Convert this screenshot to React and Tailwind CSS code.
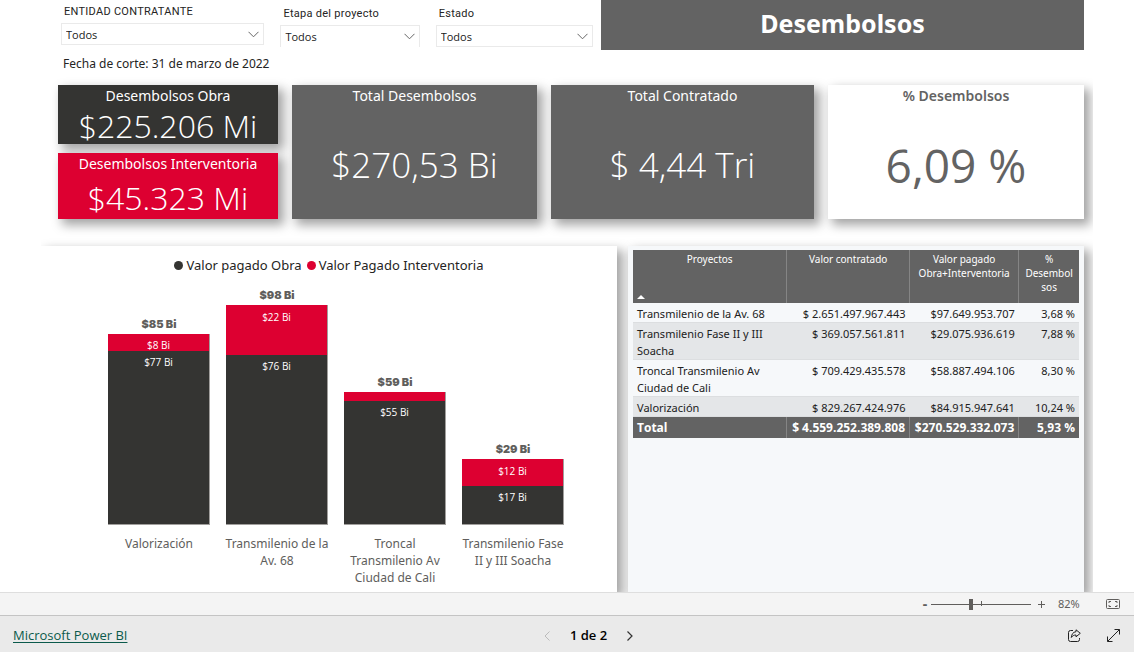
import React from "react";
import clsx from "clsx";

const filters = [
  { id: "entidad", label: "ENTIDAD CONTRATANTE", offset: "", box: "border" },
  { id: "etapa", label: "Etapa del proyecto", offset: "pt-0.5", box: "border border-b-0" },
  { id: "estado", label: "Estado", offset: "pt-0.5", box: "border" },
];

// valores en billones
const bars = [
  { name: "Valorización", total: 84.9, inter: 7.6, labels: ["$85 Bi", "$8 Bi", "$77 Bi"] },
  { name: "Transmilenio de la Av. 68", total: 97.6, inter: 22, labels: ["$98 Bi", "$22 Bi", "$76 Bi"] },
  { name: "Troncal Transmilenio Av Ciudad de Cali", total: 58.9, inter: 4, labels: ["$59 Bi", "", "$55 Bi"] },
  { name: "Transmilenio Fase II y III Soacha", total: 29.2, inter: 12, labels: ["$29 Bi", "$12 Bi", "$17 Bi"] },
];

const PX_POR_BILLON = 2.25;

const rows = [
  ["Transmilenio de la Av. 68", "$ 2.651.497.967.443", "$97.649.953.707", "3,68 %"],
  ["Transmilenio Fase II y III Soacha", "$ 369.057.561.811", "$29.075.936.619", "7,88 %"],
  ["Troncal Transmilenio Av Ciudad de Cali", "$ 709.429.435.578", "$58.887.494.106", "8,30 %"],
  ["Valorización", "$ 829.267.424.976", "$84.915.947.641", "10,24 %"],
];

const shadow = "shadow-[5px_5px_10px_1px_rgba(0,0,0,0.36)]";

function Filter({ id, label, offset, box }) {
  return (
    <div className={clsx("flex flex-col", offset)}>
      <label
        htmlFor={id}
        className="h-[23px] pl-[3px] font-['Roboto',sans-serif] text-[11px] leading-[23px] tracking-wide whitespace-nowrap text-[#252423]"
      >
        {label}
      </label>
      <div className="relative">
        <select
          id={id}
          className={clsx(
            "block h-[22px] w-full appearance-none rounded-none border-[#eaeaea] bg-white pt-0.5 pl-1 font-['Open_Sans',sans-serif] text-[11px] text-[#212121]",
            box
          )}
        >
          <option>Todos</option>
        </select>
        <svg
          className="pointer-events-none absolute top-[8px] right-[5px] h-[7px] w-[11px]"
          viewBox="0 0 11 7"
          fill="none"
          stroke="#666"
        >
          <path d="M.5 .8 5.5 5.8 10.5 .8" />
        </svg>
      </div>
    </div>
  );
}

function Card({ title, value, className, titleClass, valueClass }) {
  return (
    <div className={clsx("flex flex-col text-center", shadow, className)}>
      <h2 className={clsx("text-sm leading-[22px]", titleClass)}>{title}</h2>
      <p
        className={clsx(
          "flex flex-1 items-center justify-center font-['Open_Sans',sans-serif] whitespace-nowrap",
          valueClass
        )}
      >
        {value}
      </p>
    </div>
  );
}

function Bar({ name, total, inter, labels }) {
  const totalHeight = Math.round(total * PX_POR_BILLON);
  const interHeight = Math.round(inter * PX_POR_BILLON);
  return (
    <div className="flex flex-col">
      <div className="flex h-[241px] flex-col justify-end px-2 text-center font-['Open_Sans',sans-serif] text-[10px] leading-4 text-white">
        <div className="pb-0.5 font-['Inter',sans-serif] text-[11px] font-black text-[#605e5c]">{labels[0]}</div>
        <div className="flex flex-col border-r border-b border-[#a19f9d]" style={{ height: totalHeight }}>
          <div
            className={clsx("shrink-0 bg-[#dd0031]", inter > 10 ? "pt-1" : "pt-[3px]")}
            style={{ height: interHeight }}
          >
            {labels[1]}
          </div>
          <div className="flex-1 bg-[#343432] pt-[3px]">{labels[2]}</div>
        </div>
      </div>
      <div className="px-1 pt-[10px] text-center text-xs leading-[17px] text-[#605e5c]">{name}</div>
    </div>
  );
}

function Chart() {
  return (
    <section className={clsx("flex flex-col bg-white", shadow)}>
      <div className="flex h-[38px] items-center justify-center gap-[5px] pt-px text-[13px] text-[#252423]">
        <span className="flex items-center gap-[3px]">
          <span className="size-[9px] rounded-full bg-[#343432]" />
          Valor pagado Obra
        </span>
        <span className="flex items-center gap-[3px]">
          <span className="size-[9px] rounded-full bg-[#dd0031]" />
          Valor Pagado Interventoria
        </span>
      </div>
      <div className="grid grid-cols-4 pr-[45px] pl-[59px]">
        {bars.map((bar) => (
          <Bar key={bar.name} {...bar} />
        ))}
      </div>
    </section>
  );
}

function ProjectTable() {
  const head = "border-r border-[#858585] px-1 pt-0.5 align-top font-normal last:border-r-0";
  return (
    <section className={clsx("bg-[#f6f8fa] px-[5px] pt-1", shadow)}>
      <table className="w-full table-fixed border-collapse text-[11px] text-[#212121]">
        <colgroup>
          <col className="w-[34.5%]" />
          <col className="w-[27.5%]" />
          <col className="w-[24.5%]" />
          <col className="w-[13.5%]" />
        </colgroup>
        <thead>
          <tr className="h-[53px] bg-[#636363] text-[10px] leading-[14px] text-white">
            <th className={clsx(head, "relative")}>
              Proyectos
              <svg className="absolute bottom-1 left-1 h-1 w-2" viewBox="0 0 8 4" fill="#fff">
                <path d="M4 0 8 4H0z" />
              </svg>
            </th>
            <th className={head}>Valor contratado</th>
            <th className={head}>Valor pagado Obra+Interventoria</th>
            <th className={clsx(head, "break-words")}>% Desembolsos</th>
          </tr>
        </thead>
        <tbody className="leading-[17px]">
          {rows.map((row, i) => (
            <tr key={row[0]} className={i % 2 ? "bg-[#e4e6e8]" : ""}>
              {row.map((cell, j) => (
                <td
                  key={cell}
                  className={clsx(
                    "border-b border-[#dcdee0] px-1 pt-0.5 align-top",
                    j ? "text-right whitespace-nowrap" : "pr-4"
                  )}
                >
                  {cell}
                </td>
              ))}
            </tr>
          ))}
        </tbody>
        <tfoot>
          <tr className="h-[21px] bg-[#636363] text-right font-['Open_Sans',sans-serif] text-xs font-bold whitespace-nowrap text-white">
            <td className="border-r border-[#858585] px-1 pt-0.5 text-left">Total</td>
            <td className="border-r border-[#858585] px-1 pt-0.5">$ 4.559.252.389.808</td>
            <td className="border-r border-[#858585] px-1 pt-0.5">$270.529.332.073</td>
            <td className="px-1 pt-0.5">5,93 %</td>
          </tr>
        </tfoot>
      </table>
    </section>
  );
}

function ZoomBar() {
  return (
    <div className="flex h-[23px] shrink-0 items-center justify-end border-t border-[#dedede] bg-[#f4f4f4] pr-[14px] text-[#605e5c]">
      <button aria-label="Alejar" className="w-3 text-sm leading-none font-bold">-</button>
      <div className="relative flex h-4 w-[100px] items-center">
        <span className="absolute top-[5px] left-[50px] h-[5px] w-px bg-[#605e5c]" />
        <input
          type="range"
          min="0"
          max="200"
          defaultValue="80"
          aria-label="Zoom"
          className="relative h-px w-full appearance-none bg-[#605e5c] [&::-webkit-slider-thumb]:h-[11px] [&::-webkit-slider-thumb]:w-1 [&::-webkit-slider-thumb]:appearance-none [&::-webkit-slider-thumb]:bg-[#605e5c]"
        />
      </div>
      <button aria-label="Acercar" className="flex w-5 justify-center">
        <svg className="size-[7px]" viewBox="0 0 7 7" stroke="#605e5c">
          <path d="M3.5 0v7M0 3.5h7" />
        </svg>
      </button>
      <span className="w-[55px] pl-[7px] text-[11px]">82%</span>
      <button aria-label="Ajustar a la página">
        <svg className="h-[10px] w-[14px]" viewBox="0 0 14 10" fill="none" stroke="#605e5c">
          <rect x=".5" y=".5" width="13" height="9" rx="1" />
          <path d="M3 4V2.5h2M9 2.5h2V4M11 6v1.500H9M5 7.500H3V6" />
        </svg>
      </button>
    </div>
  );
}

function Footer() {
  return (
    <footer className="grid h-[37px] shrink-0 grid-cols-[1fr_auto_1fr] items-center border-t border-[#c4c4c4] bg-[#eaeaea] pt-[3px] pr-[14px] pl-[13px]">
      <a
        href="https://powerbi.microsoft.com"
        className="font-['Open_Sans',sans-serif] text-[13px] font-medium text-[#0b5a4c] underline underline-offset-2"
      >
        Microsoft Power BI
      </a>
      <nav className="flex items-center gap-5 pl-11 font-['Open_Sans',sans-serif] text-[13px] font-semibold text-black">
        <button aria-label="Página anterior" disabled>
          <svg className="h-[10px] w-[6px]" viewBox="0 0 6 10" fill="none" stroke="#bbb">
            <path d="M5.500 .5 1 5 5.500 9.500" />
          </svg>
        </button>
        1 de 2
        <button aria-label="Página siguiente">
          <svg className="h-[10px] w-[6px]" viewBox="0 0 6 10" fill="none" stroke="#333" strokeWidth="1.200">
            <path d="M.5 .5 5 5 .5 9.500" />
          </svg>
        </button>
      </nav>
      <div className="flex items-center justify-end gap-[26px]">
        <button aria-label="Compartir">
          <svg className="size-[13px]" viewBox="0 0 13 13" fill="none" stroke="#222" strokeLinejoin="round">
            <path d="M5 1.500H2.500a2 2 0 0 0-2 2v7a2 2 0 0 0 2 2h7a2 2 0 0 0 2-2V9" />
            <path d="M8 .8 12.300 4.300 8 7.800V6C5.800 6 4.500 6.800 3.300 8.500 3.500 5.500 5 3 8 2.700z" />
          </svg>
        </button>
        <button aria-label="Pantalla completa">
          <svg className="size-[13px]" viewBox="0 0 13 13" fill="none" stroke="#222">
            <path d="M.7 12.300 12.300 .7M7.500 .5h5v5M.5 7.500v5h5" />
          </svg>
        </button>
      </div>
    </footer>
  );
}

export default function App() {
  return (
    <div className="flex h-screen flex-col overflow-hidden bg-white font-['Noto_Sans','Open_Sans',sans-serif]">
      <main className="mx-[41px] flex min-h-0 flex-1 flex-col overflow-hidden">
        <div className="flex gap-2 pr-[9px] pl-5">
          <div className="grid flex-[532] grid-cols-[203fr_139fr_157fr] items-start gap-4">
            {filters.map((filter) => (
              <Filter key={filter.id} {...filter} />
            ))}
          </div>
          <h1 className="flex h-[50px] flex-[483] items-center justify-center bg-[#636363] pb-0.5 text-[25px] font-bold text-white">
            Desembolsos
          </h1>
        </div>
        <p className="h-[35px] pt-1 pl-[22px] text-xs leading-[19px] text-[#252423]">Fecha de corte: 31 de marzo de 2022</p>

        <div className="grid h-[134px] shrink-0 grid-cols-[220fr_245fr_263fr_256fr] gap-[14px] pr-[9px] pl-[17px]">
          <div className="grid grid-rows-[59px_66px] gap-[9px]">
            <Card
              title="Desembolsos Obra"
              value="$225.206 Mi"
              className="bg-[#343432] text-white"
              valueClass="text-[32px] leading-8 font-light"
            />
            <Card
              title="Desembolsos Interventoria"
              value="$45.323 Mi"
              className="bg-[#dd0031] text-white"
              valueClass="pt-0.5 text-[32px] leading-8 font-light"
            />
          </div>
          <Card
            title="Total Desembolsos"
            value="$270,53 Bi"
            className="bg-[#636363] text-white"
            valueClass="pt-1 text-[35px] font-light"
          />
          <Card
            title="Total Contratado"
            value="$ 4,44 Tri"
            className="bg-[#636363] text-white"
            valueClass="pt-1 text-[35px] font-light"
          />
          <Card
            title="% Desembolsos"
            value="6,09 %"
            className="bg-white text-[#636363]"
            titleClass="font-semibold"
            valueClass="pt-1 text-[46px] font-normal"
          />
        </div>

        <div className="mt-[27px] grid min-h-0 flex-1 grid-cols-[576fr_456fr] gap-[11px] pr-[9px]">
          <Chart />
          <ProjectTable />
        </div>
      </main>
      <ZoomBar />
      <Footer />
    </div>
  );
}
